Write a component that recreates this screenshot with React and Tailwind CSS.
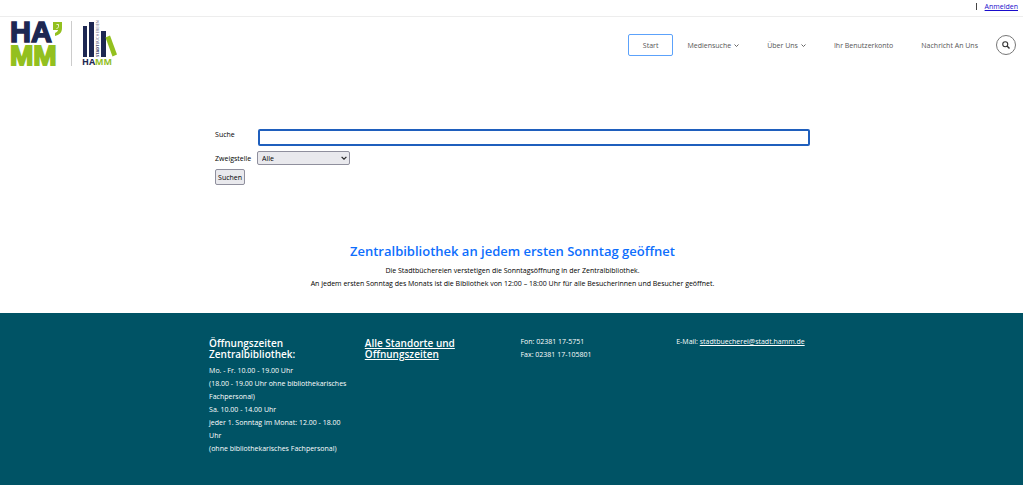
import React, { useState } from "react";

const navItems = [
  { label: "Start", active: true },
  { label: "Mediensuche", menu: true },
  { label: "Über Uns", menu: true },
  { label: "Ihr Benutzerkonto" },
  { label: "Nachricht An Uns" },
];

function Chevron() {
  return (
    <svg className="ml-[3px] mt-px size-[5px]" viewBox="0 0 10 10" fill="none">
      <path d="M1 3l4 4 4-4" stroke="currentColor" strokeWidth="1.8" />
    </svg>
  );
}

function CityLogo() {
  return (
    <svg
      className="h-[48px] w-[52px] overflow-visible font-['Liberation_Sans',sans-serif] font-bold"
      viewBox="0 0 52 48"
    >
      <text
        x="-1"
        y="21"
        fontSize="29"
        fill="#1d2752"
        stroke="#1d2752"
        strokeWidth="1.5"
      >
        HA
      </text>
      <path
        d="M42 1h9v6c0 5-3 7-7 8v-3c2-1 3-2 3-3h-5z"
        fill="#93c01f"
      />
      <path d="M45.500 3.500h2v2c0 1-1 2-2 2" stroke="#fff" strokeWidth="0.8" fill="none" />
      <text
        x="-1"
        y="44"
        fontSize="28"
        fill="#93c01f"
        stroke="#93c01f"
        strokeWidth="1.8"
      >
        MM
      </text>
    </svg>
  );
}

function LibraryLogo() {
  return (
    <svg
      className="h-[48px] w-[36px] overflow-visible font-['Open_Sans',sans-serif] font-bold"
      viewBox="0 0 36 48"
    >
      <g fill="#1d2752">
        <path d="M1 5h4v31H1zM7 1h5v35H7zM19 10h5v26h-5z" />
        <text
          transform="translate(17 36) rotate(-90)"
          fontSize="4"
          opacity="0.85"
        >
          STADT
          <tspan fontWeight="400">BÜCHEREIEN</tspan>
        </text>
      </g>
      <path d="M23.500 16.500l4.500-2 7 19-4.500 2z" fill="#93c01f" />
      <text x="0" y="44" fontSize="9" fill="#1d2752">
        HA<tspan fill="#93c01f">MM</tspan>
      </text>
    </svg>
  );
}

function Header() {
  return (
    <header>
      <div className="flex h-[17px] items-center justify-end gap-2 border-b border-[#ededed] pr-[5px] pb-[3px]">
        <span className="h-[7px] w-px bg-[#444]" />
        <a href="#anmelden" className="text-[#1a0dcc] underline">
          Anmelden
        </a>
      </div>
      <div className="flex items-start justify-between pt-1 pr-[7px] pl-[11px]">
        <a href="#start" className="flex" aria-label="Stadtbüchereien Hamm">
          <CityLogo />
          <span className="mr-[10px] ml-2 h-[45px] w-px bg-[#ccc]" />
          <LibraryLogo />
        </a>
        <nav className="mt-[13px] flex items-center text-[#555]">
          {navItems.map((item) => (
            <a
              key={item.label}
              href="#nav"
              className={
                item.active
                  ? "flex h-[22px] items-center rounded-[2px] border border-[#5ca2fb] px-[14px]"
                  : "flex h-[22px] items-center px-[14px]"
              }
            >
              {item.label}
              {item.menu && <Chevron />}
            </a>
          ))}
          <button
            type="button"
            aria-label="Suche öffnen"
            className="ml-1 flex size-5 items-center justify-center rounded-full border border-[#777] text-[#333]"
          >
            <svg className="size-2" viewBox="0 0 16 16" fill="none">
              <circle cx="6.500" cy="6.500" r="5" stroke="currentColor" strokeWidth="2.200" />
              <path d="M10 10l5 5" stroke="currentColor" strokeWidth="2.800" />
            </svg>
          </button>
        </nav>
      </div>
    </header>
  );
}

function SearchForm() {
  const [query, setQuery] = useState("");

  return (
    <form
      className="mt-[60px] px-[14px]"
      onSubmit={(event) => event.preventDefault()}
    >
      <div className="flex items-start">
        <label htmlFor="query" className="w-[43px] leading-[11px]">
          Suche
        </label>
        <input
          id="query"
          type="text"
          value={query}
          onChange={(event) => setQuery(event.target.value)}
          className="h-[17px] min-w-0 grow rounded-[2px] border-2 border-[#1f5fbd] bg-white px-1 outline-none"
        />
      </div>
      <div className="mt-[5px] flex items-center">
        <label htmlFor="branch" className="w-[42px]">
          Zweigstelle
        </label>
        <div className="relative">
          <select
            id="branch"
            className="block h-[14px] w-[93px] appearance-none rounded-[2px] border border-[#8f8f9d] bg-[#e9e9ed] pl-1 text-black"
          >
            <option>Alle</option>
          </select>
          <svg
            className="pointer-events-none absolute top-1 right-[3px] size-[6px]"
            viewBox="0 0 10 10"
            fill="none"
          >
            <path d="M1 3l4 4 4-4" stroke="#222" strokeWidth="2" />
          </svg>
        </div>
      </div>
      <button
        type="submit"
        className="mt-1 block h-4 rounded-[2px] border border-[#8f8f9d] bg-[#e9e9ed] px-[2px] text-black"
      >
        Suchen
      </button>
    </form>
  );
}

function Footer() {
  return (
    <footer className="bg-[#005365] pt-[22px] pb-9 pl-[2px] text-white">
      <div className="mx-auto grid w-[61%] grid-cols-4">
        <div className="px-2">
          <h3 className="mt-[3px] mb-1 text-[10px] leading-[11px] font-semibold">
            Öffnungszeiten Zentralbibliothek:
          </h3>
          <p>
            Mo. - Fr. 10.00 - 19.00 Uhr
            <br />
            (18.00 - 19.00 Uhr ohne bibliothekarisches Fachpersonal)
            <br />
            Sa. 10.00 - 14.00 Uhr
            <br />
            jeder 1. Sonntag im Monat: 12.00 - 18.00 Uhr
            <br />
            (ohne bibliothekarisches Fachpersonal)
          </p>
        </div>
        <div className="px-2">
          <h3 className="mt-[3px] text-[10px] leading-[11px] font-semibold">
            <a href="#standorte" className="underline">
              Alle Standorte und Öffnungszeiten
            </a>
          </h3>
        </div>
        <div className="px-2">
          <p>Fon: 02381 17-5751</p>
          <p>Fax: 02381 17-105801</p>
        </div>
        <div className="px-2">
          <p className="whitespace-nowrap">
            E-Mail:{" "}
            <a href="mailto:stadtbuecherei@stadt.hamm.de" className="underline">
              stadtbuecherei@stadt.hamm.de
            </a>
          </p>
        </div>
      </div>
    </footer>
  );
}

export default function App() {
  return (
    <div className="bg-white font-['Open_Sans',sans-serif] text-[7px] leading-[13px] text-black">
      <Header />
      <main className="pl-[2px]">
        <div className="mx-auto w-[61%]">
          <SearchForm />
          <section className="pt-[57px] pb-[23px] text-center">
            <h2 className="mb-1 text-[13px] leading-[18px] font-semibold text-[#0d6efd]">
              Zentralbibliothek an jedem ersten Sonntag geöffnet
            </h2>
            <p>
              Die Stadtbüchereien verstetigen die Sonntagsöffnung in der
              Zentralbibliothek.
            </p>
            <p>
              An jedem ersten Sonntag des Monats ist die Bibliothek von 12:00 –
              18:00 Uhr für alle Besucherinnen und Besucher geöffnet.
            </p>
          </section>
        </div>
      </main>
      <Footer />
    </div>
  );
}
